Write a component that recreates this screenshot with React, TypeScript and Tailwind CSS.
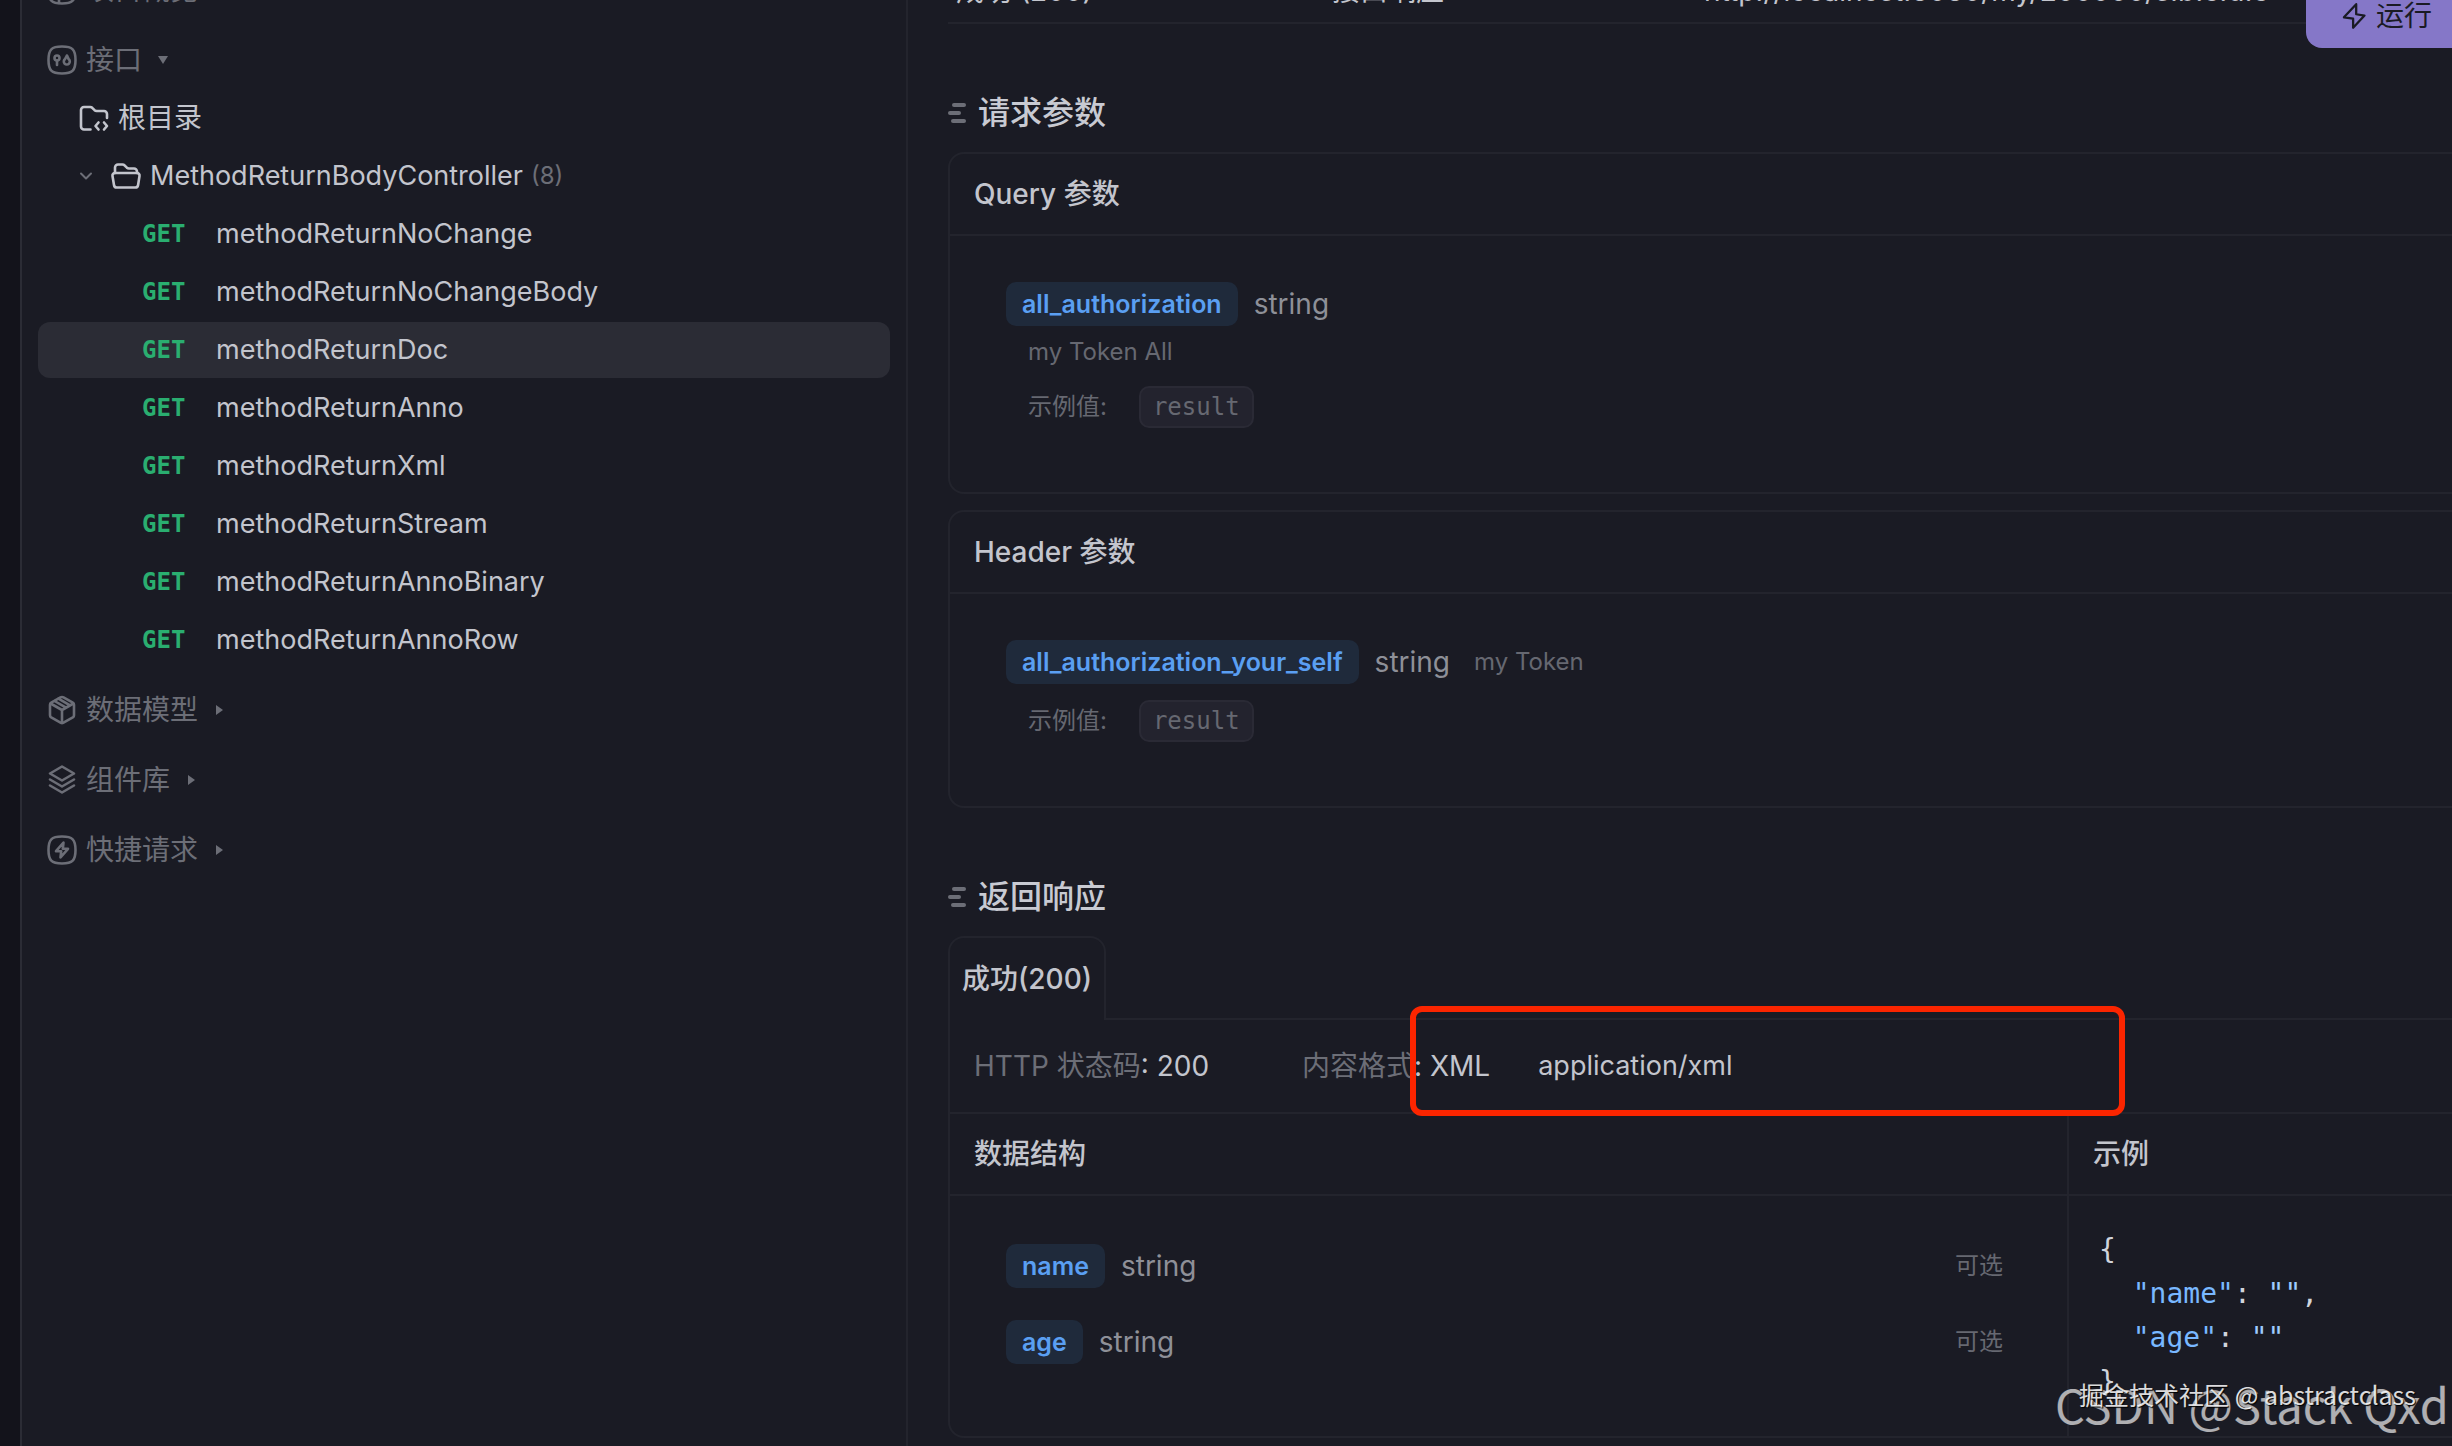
import { useState } from "react";
import type { ReactNode } from "react";
import clsx from "clsx";

const methods = [
  "methodReturnNoChange",
  "methodReturnNoChangeBody",
  "methodReturnDoc",
  "methodReturnAnno",
  "methodReturnXml",
  "methodReturnStream",
  "methodReturnAnnoBinary",
  "methodReturnAnnoRow",
];

const fields = [
  { name: "name", type: "string" },
  { name: "age", type: "string" },
];

function Svg({ children, className = "size-8" }: { children: ReactNode; className?: string }) {
  return (
    <svg
      viewBox="0 0 32 32"
      className={clsx("shrink-0", className)}
      fill="none"
      stroke="currentColor"
      strokeWidth="2.6"
      strokeLinecap="round"
      strokeLinejoin="round"
      aria-hidden="true"
    >
      {children}
    </svg>
  );
}

const squircle = "M16 2.5C26.5 2.5 29.5 5.5 29.5 16S26.5 29.5 16 29.5 2.5 26.5 2.5 16 5.5 2.5 16 2.5z";

const OverviewIcon = () => (
  <Svg>
    <path d={squircle} />
    <path d="M13 22v7" />
  </Svg>
);

const ApiIcon = () => (
  <Svg>
    <path d={squircle} />
    <circle cx="11" cy="14" r="2.5" />
    <path d="M11 16.5V21" />
    <path d="M21 11.5l-2 3.6a3 3 0 1 0 3.6 0z" />
  </Svg>
);

const ModelIcon = () => (
  <Svg>
    <path d="M14.5 3.4a3 3 0 0 1 3 0l9.300 5.200a2.500 2.500 0 0 1 1.200 2.200v10.400a2.500 2.500 0 0 1-1.200 2.200l-9.300 5.200a3 3 0 0 1-3 0l-9.300-5.200A2.500 2.500 0 0 1 4 21.200V10.800a2.500 2.500 0 0 1 1.200-2.200z" />
    <path d="M4.600 9.500L16 16l11.400-6.500M16 16v13M8.500 7l11.500 6.700M12.500 4.700L24 11.400" />
  </Svg>
);

const LayersIcon = () => (
  <Svg>
    <path d="M16 2.500L28 9.500 16 16.500 4 9.500z" />
    <path d="M4 15.500l12 7 12-7M4 21.500l12 7 12-7" />
  </Svg>
);

const QuickIcon = () => (
  <Svg>
    <path d={squircle} />
    <path d="M17.500 8.500L10 17.200h5.200l-.7 6.300 7.500-8.700h-5.200z" />
  </Svg>
);

const FolderCodeIcon = () => (
  <Svg>
    <path d="M12.500 27.500H6a3 3 0 0 1-3-3V8a3 3 0 0 1 3-3h6.200a3 3 0 0 1 2 .8l2.400 2.400a3 3 0 0 0 2 .8H26a3 3 0 0 1 3 3v4" />
    <path d="M20.500 20.500L17.500 24l3 3.500M26 20.500l3 3.500-3 3.500" />
  </Svg>
);

const FolderOpenIcon = () => (
  <Svg>
    <path d="M5 13V7.500a3 3 0 0 1 3-3h4.500a3 3 0 0 1 2 .8l2.400 2.400a3 3 0 0 0 2 .8H24a3 3 0 0 1 3 3V13" />
    <path d="M5 13h22a2.500 2.500 0 0 1 2.500 3l-1.400 9a2.800 2.800 0 0 1-2.800 2.500H6.700A2.800 2.800 0 0 1 4 25l-1.500-9A2.500 2.500 0 0 1 5 13z" />
  </Svg>
);

const BoltIcon = () => (
  <Svg className="size-7">
    <path d="M18.500 2.500L4.500 17.500l10.500 1.500V29.500l13-14-9.500-1.500z" />
  </Svg>
);

function Caret({ open = false }: { open?: boolean }) {
  return (
    <svg viewBox="0 0 10 10" className="ml-2 size-[10px] shrink-0" fill="currentColor" aria-hidden="true">
      {open ? <path d="M0 1h10L5 9z" /> : <path d="M2 0v10l7-5z" />}
    </svg>
  );
}

function SectionRow({ icon, label, open }: { icon: ReactNode; label: string; open?: boolean }) {
  return (
    <button className="flex h-14 w-full items-center gap-2 pl-2 text-left text-[#6c6e77]">
      {icon}
      <span>{label}</span>
      <Caret open={open} />
    </button>
  );
}

function SectionTitle({ children }: { children: ReactNode }) {
  return (
    <h2 className="mb-[15px] flex h-12 items-center gap-3 text-[32px] leading-[48px] font-medium text-[#c8cad2]">
      <svg viewBox="0 0 18 20" className="h-5 w-[18px]" fill="#6c6e77" aria-hidden="true">
        <rect x="4" y="0" width="14" height="4" rx="2" />
        <rect x="0" y="8" width="13" height="4" rx="2" />
        <rect x="3" y="16" width="15" height="4" rx="2" />
      </svg>
      {children}
    </h2>
  );
}

function FieldTag({ children }: { children: ReactNode }) {
  return (
    <span className="flex h-11 items-center rounded-[10px] bg-[#1f2a3b] px-4 text-[25px] font-semibold text-[#5a9ff2]">
      {children}
    </span>
  );
}

function ParamCard({
  title,
  name,
  inlineNote,
  note,
}: {
  title: string;
  name: string;
  inlineNote?: string;
  note?: string;
}) {
  return (
    <section className="rounded-2xl border-2 border-[#23242d]">
      <h3 className="flex h-[82px] items-center border-b-2 border-[#23242d] px-6 font-medium">{title}</h3>
      <div className="px-14 pt-[46px] pb-16">
        <div className="flex h-11 items-center">
          <FieldTag>{name}</FieldTag>
          <span className="ml-4 text-[#8e9098]">string</span>
          {inlineNote && <span className="ml-6 text-[24px] text-[#666871]">{inlineNote}</span>}
        </div>
        {note && <p className="mt-2 pl-[22px] text-[24px] leading-9 text-[#666871]">{note}</p>}
        <div className="mt-4 flex h-[42px] items-center gap-8 pl-[22px] text-[24px] text-[#666871]">
          <span>示例值:</span>
          <code className="flex h-full items-center rounded-[10px] border-2 border-[#2a2a35] bg-[#23232e] px-3 font-['DejaVu_Sans_Mono',monospace]">
            result
          </code>
        </div>
      </div>
    </section>
  );
}

export default function App() {
  const [active, setActive] = useState("methodReturnDoc");

  return (
    <div className="flex h-screen overflow-hidden bg-[#1a1b24] font-['Inter','Noto_Sans_CJK_SC',sans-serif] text-[28px] leading-[42px] text-[#c3c5cd]">
      <div className="w-5 shrink-0 bg-[#13131b]" />

      {/* API tree */}
      <aside className="w-[888px] shrink-0 overflow-hidden border-x-2 border-l-[#2b2c35] border-r-[#23242d] px-4">
        <nav className="-mt-[38px] flex flex-col gap-[14px]">
          <SectionRow icon={<OverviewIcon />} label="项目概览" />
          <div className="flex flex-col gap-[2px]">
            <SectionRow icon={<ApiIcon />} label="接口" open />
            <button className="flex h-14 items-center gap-2 pl-10 text-left">
              <FolderCodeIcon />
              根目录
            </button>
            <button className="flex h-14 items-center gap-2 pl-10 text-left text-[27px]">
              <svg viewBox="0 0 16 16" className="mr-2 size-4" fill="none" stroke="#6c6e77" strokeWidth="2" strokeLinecap="round" strokeLinejoin="round" aria-hidden="true">
                <path d="M3 5.500l5 5 5-5" />
              </svg>
              <FolderOpenIcon />
              MethodReturnBodyController
              <span className="text-[24px] text-[#6c6e77]">(8)</span>
            </button>
            {methods.map((method) => (
              <button
                key={method}
                onClick={() => setActive(method)}
                className={clsx(
                  "flex h-14 items-center rounded-xl pl-[104px] text-left text-[27px]",
                  active === method && "bg-[#2b2c35]"
                )}
              >
                <span className="w-[74px] font-['DejaVu_Sans_Mono',monospace] text-[24px] font-bold text-[#2aae70]">GET</span>
                {method}
              </button>
            ))}
          </div>
          <SectionRow icon={<ModelIcon />} label="数据模型" />
          <SectionRow icon={<LayersIcon />} label="组件库" />
          <SectionRow icon={<QuickIcon />} label="快捷请求" />
        </nav>
      </aside>

      {/* API detail */}
      <main className="relative min-w-0 flex-1 overflow-hidden pl-10">
        <div className="-mt-10 -mr-10">
          <div className="flex h-16 items-center border-b-2 border-[#23242d]">
            <span className="w-[384px] pl-2">成功 (200)</span>
            <span className="w-[372px]">接口响应</span>
            <span>http://localhost:8080/my/200000/s.b.c.d.e</span>
          </div>

          <div className="pt-[65px]">
            <SectionTitle>请求参数</SectionTitle>
            <div className="flex flex-col gap-4">
              <ParamCard title="Query 参数" name="all_authorization" note="my Token All" />
              <ParamCard title="Header 参数" name="all_authorization_your_self" inlineNote="my Token" />
            </div>
          </div>

          <div className="pt-[65px]">
            <SectionTitle>返回响应</SectionTitle>
            <button className="relative z-10 -mb-[2px] flex h-[84px] items-center rounded-t-2xl border-2 border-b-0 border-[#23242d] bg-[#1a1b24] px-3 font-medium">
              成功(200)
            </button>
            <section className="rounded-b-2xl border-2 border-[#23242d]">
              <div className="relative flex h-[94px] items-center border-b-2 border-[#23242d] px-6">
                <p className="w-[328px]">
                  <span className="text-[#6c6e77]">HTTP 状态码</span>: 200
                </p>
                <p>
                  <span className="text-[#6c6e77]">内容格式</span>: XML
                </p>
                <p className="ml-12 text-[27px]">application/xml</p>
                <div className="absolute -top-[14px] left-[460px] z-20 h-[110px] w-[715px] rounded-xl border-6 border-[#fb2500]" />
              </div>

              <div className="flex">
                <div className="min-w-0 flex-1 border-r-2 border-[#23242d]">
                  <h3 className="flex h-[82px] items-center border-b-2 border-[#23242d] px-6 font-medium">数据结构</h3>
                  <div className="flex flex-col gap-8 pt-12 pr-16 pb-[72px] pl-14">
                    {fields.map((field) => (
                      <div key={field.name} className="flex h-11 items-center">
                        <FieldTag>{field.name}</FieldTag>
                        <span className="ml-4 text-[#8e9098]">{field.type}</span>
                        <span className="ml-auto text-[24px] text-[#666871]">可选</span>
                      </div>
                    ))}
                  </div>
                </div>
                <div className="w-[421px] shrink-0">
                  <h3 className="flex h-[82px] items-center border-b-2 border-[#23242d] px-6 font-medium">示例</h3>
                  <pre className="px-[30px] pt-8 font-['DejaVu_Sans_Mono',monospace] leading-11 text-[#d0d4dc]">
                    {"{\n  "}
                    <span className="text-[#79b8ff]">"name"</span>
                    {": "}
                    <span className="text-[#9ecbff]">""</span>
                    {",\n  "}
                    <span className="text-[#79b8ff]">"age"</span>
                    {": "}
                    <span className="text-[#9ecbff]">""</span>
                    {"\n}"}
                  </pre>
                </div>
              </div>
            </section>
          </div>
        </div>

        <button className="absolute -top-4 -right-[14px] flex h-16 w-40 items-center justify-center gap-2 rounded-2xl bg-[#8577c8] text-[#1a1b24]">
          <BoltIcon />
          运行
        </button>

        {/* Watermarks */}
        <p className="absolute right-[3px] bottom-3 font-['Noto_Sans_CJK_SC',sans-serif] text-[47px] leading-[60px] whitespace-nowrap text-white/65">
          CSDN @Stack Qxd
        </p>
        <p className="absolute right-9 bottom-[34px] font-['Noto_Sans_CJK_SC',sans-serif] text-[25px] leading-9 whitespace-nowrap text-white/85 [text-shadow:1px_1px_1px_#000]">
          掘金技术社区 @ abstractclass
        </p>
      </main>
    </div>
  );
}
